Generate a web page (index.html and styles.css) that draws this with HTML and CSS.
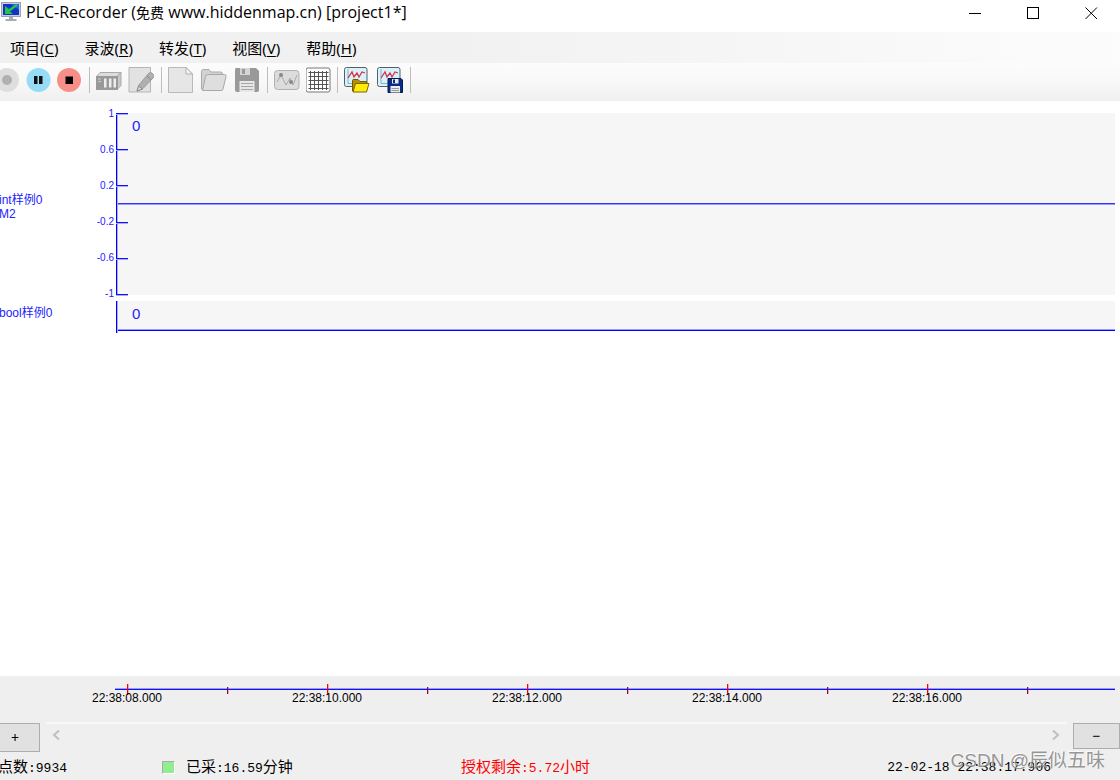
FILE: index.html
```html
<!DOCTYPE html>
<html lang="zh-CN">
<head>
<meta charset="utf-8">
<title>PLC-Recorder</title>
<link rel="stylesheet" href="styles.css">
</head>
<body>
<div class="window">
  <header class="titlebar">
    <svg class="app-icon" width="20" height="20" viewBox="0 0 20 20">
      <rect x="0.5" y="0.5" width="19" height="14" fill="#c9ced6" stroke="#9aa3b0"/>
      <rect x="2" y="2" width="16" height="11" fill="#1034c8"/>
      <path d="M10 2h8v6z" fill="#2a62ea"/>
      <path d="M4 4v8h8l-3-2.500 8-6-2-1.500-7 5z" fill="#22c44a"/>
      <path d="M8 15h4v2h3.500v2h-11v-2H8z" fill="#a9adb2"/>
    </svg>
    <h1 class="title">PLC-Recorder (<span class="title-han">免费</span> www.hiddenmap.cn) [project1*]</h1>
    <div class="window-buttons">
      <button class="window-button" aria-label="最小化"><svg width="13" height="13" viewBox="0 0 13 13"><path d="M0 6.500h12" stroke="#000"/></svg></button>
      <button class="window-button" aria-label="最大化"><svg width="13" height="13" viewBox="0 0 13 13"><rect x="0.500" y="0.500" width="11" height="11" fill="none" stroke="#000"/></svg></button>
      <button class="window-button" aria-label="关闭"><svg width="13" height="13" viewBox="0 0 13 13"><path d="M0.500 0.500l11.500 11.500M12 0.500L0.500 12" stroke="#000"/></svg></button>
    </div>
  </header>

  <nav class="menubar">
    <button class="menu">项目(<u>C</u>)</button>
    <button class="menu">录波(<u>R</u>)</button>
    <button class="menu">转发(<u>T</u>)</button>
    <button class="menu">视图(<u>V</u>)</button>
    <button class="menu">帮助(<u>H</u>)</button>
  </nav>

  <div class="toolbar" role="toolbar">
    <div class="tools tools-run">
      <button class="tool" aria-label="录制"><svg viewBox="0 0 26 26"><circle cx="13" cy="13" r="12" fill="#dedede"/><circle cx="13" cy="13" r="5" fill="#b0b0b0"/></svg></button>
      <button class="tool" aria-label="暂停"><svg viewBox="0 0 26 26"><circle cx="13.500" cy="13" r="12" fill="#96dcf6"/><path d="M9 9h3.500v8H9zM14 9h3.500v8H14z" fill="#111"/></svg></button>
      <button class="tool" aria-label="停止"><svg viewBox="0 0 26 26"><circle cx="13" cy="13" r="12" fill="#f78f88"/><path d="M9.500 9.500h7.500v7.500H9.500z" fill="#000"/></svg></button>
    </div>
    <span class="separator"></span>
    <div class="tools">
      <button class="tool" aria-label="设备"><svg viewBox="0 0 26 26"><path d="M0.500 9.500L4 5.500h21L21 9.500z" fill="#ddd" stroke="#aaa"/><path d="M21 9.500l4-4v13l-4 4z" fill="#c8c8c8" stroke="#aaa"/><rect x="0.500" y="9.500" width="21" height="13" fill="#999" stroke="#999"/><path d="M8 11.500h2.500v9H8zM13 11.500h2.500v9H13zM17.500 11.500H20v9h-2.500z" fill="#eee"/><path d="M2 12h3M2 14.500h3" stroke="#ccc"/></svg></button>
      <button class="tool" aria-label="编辑"><svg viewBox="0 0 26 26"><path d="M1 0.500h21.500v24.500H1z" fill="#e2e2e2" stroke="#b5b5b5"/><path d="M9 24l2-6L20.500 6.500q2-2 4 0t1 4L15.500 21z" fill="#b0b0b0" stroke="#999"/><path d="M9 24l1.500-5 4 3zM19 9l4 3.500" stroke="#888" fill="#ddd"/></svg></button>
    </div>
    <span class="separator"></span>
    <div class="tools tools-file">
      <button class="tool" aria-label="新建"><svg viewBox="0 0 26 26"><path d="M0.500 0.500H18l6.500 6.500v18.500h-24z" fill="#e6e6e6" stroke="#b9b9b9"/><path d="M18 0.500V7h6.500z" fill="#f4f4f4" stroke="#b0b0b0"/></svg></button>
      <button class="tool" aria-label="打开"><svg viewBox="0 0 26 26"><path d="M0.500 22V4.500q0-2 2-2H8l2 2.500h9.500q2 0 2 2V23h-19z" fill="#d2d2d2" stroke="#ababab"/><path d="M1.500 23.500L4.500 9.500q.5-2 2.500-2h16.500q2 0 1.500 2L22 22q-.5 1.500-2 1.500z" fill="#dedede" stroke="#a8a8a8"/></svg></button>
      <button class="tool" aria-label="保存"><svg viewBox="0 0 26 26"><path d="M2 1h20l3 3v19q0 2-2 2H3q-2 0-2-2V3q0-2 1-2z" fill="#999"/><path d="M6 1h10v7H6z" fill="#d5d5d5"/><path d="M8 2h3v5H8z" fill="#999"/><path d="M5.500 14h15v11h-15z" fill="#e7e7e7"/><path d="M7 16.500h12M7 19.500h12M7 22.500h12" stroke="#a5a5a5"/></svg></button>
    </div>
    <span class="separator"></span>
    <div class="tools">
      <button class="tool" aria-label="曲线"><svg viewBox="0 0 26 26"><rect x="0.500" y="3.500" width="24.500" height="19" rx="3" fill="#dcdcdc" stroke="#b0b0b0"/><path d="M3 15l4-7 5 10 4-7 3 7 4-10" fill="none" stroke="#aaa"/><circle cx="7" cy="8" r="2" fill="#888"/><circle cx="17" cy="15" r="2" fill="#888"/></svg></button>
      <button class="tool" aria-label="网格"><svg viewBox="0 0 26 26"><rect x="0" y="1" width="24" height="24" rx="2" fill="#fff" stroke="#777"/><path d="M4.500 4v19M8.500 4v19M12.500 4v19M16.500 4v19M20.500 4v19M2.500 5.500h20M2.500 9.500h20M2.500 13.500h20M2.500 17.500h20M2.500 21.500h20" stroke="#555"/></svg></button>
    </div>
    <span class="separator separator-tight"></span>
    <div class="tools tools-file">
      <button class="tool" aria-label="打开曲线"><svg viewBox="0 0 26 26"><rect x="0.500" y="0.500" width="22.500" height="19" rx="2" fill="#d8f1fb" stroke="#555f66"/><path d="M4 2v14.500h18" stroke="#7fb5cf" fill="none"/><path d="M4 11l4-6 2 5 3-4 2 4 3-5 3 1" fill="none" stroke="#d83342" stroke-width="1.300"/><path d="M8.500 24V13.500q0-1 1-1H14l2 2h6.500V24z" fill="#b88e0c" stroke="#725a00"/><path d="M9 25l2.500-8.500H25L22.500 25z" fill="#ffec0a" stroke="#796700"/></svg></button>
      <button class="tool" aria-label="保存曲线"><svg viewBox="0 0 26 26"><rect x="0.500" y="0.500" width="22.500" height="19" rx="2" fill="#d8f1fb" stroke="#555f66"/><path d="M4 2v14.500h18" stroke="#7fb5cf" fill="none"/><path d="M4 11l4-6 2 5 3-4 2 4 3-5 3 1" fill="none" stroke="#d83342" stroke-width="1.300"/><path d="M11 11.500h13l1.500 1.500v12.500H11z" fill="#0a2d83" stroke="#061a54"/><path d="M15 12h6.500v4.500H15zM13.500 19h9.500v6.500h-9.500z" fill="#e9edf3"/><path d="M16 12.500h2V16h-2z" fill="#0a2d83"/><path d="M14.500 21.500H22M14.500 23.500H22" stroke="#999"/></svg></button>
    </div>
    <span class="separator"></span>
  </div>

  <main class="charts">
    <section class="chart chart-int">
      <div class="channel">int样例0<br>M2</div>
      <ol class="scale">
        <li class="scale-mark">1</li>
        <li class="scale-mark">0.6</li>
        <li class="scale-mark">0.2</li>
        <li class="scale-mark">-0.2</li>
        <li class="scale-mark">-0.6</li>
        <li class="scale-mark">-1</li>
      </ol>
      <div class="plot plot-int"><span class="value">0</span></div>
    </section>
    <section class="chart chart-bool">
      <div class="channel channel-bool">bool样例0</div>
      <div class="scale"></div>
      <div class="plot plot-bool"><span class="value">0</span></div>
    </section>
  </main>

  <footer class="bottom">
    <div class="timeline">
      <div class="timeline-line"></div>
      <ol class="times">
        <li class="time">22:38:08.000</li>
        <li class="time time-minor"></li>
        <li class="time">22:38:10.000</li>
        <li class="time time-minor"></li>
        <li class="time">22:38:12.000</li>
        <li class="time time-minor"></li>
        <li class="time">22:38:14.000</li>
        <li class="time time-minor"></li>
        <li class="time">22:38:16.000</li>
        <li class="time time-minor"></li>
      </ol>
    </div>
    <div class="scroll-row">
      <button class="zoom zoom-in">+</button>
      <div class="scrollbar">
        <button class="arrow" aria-label="向左"><svg width="10" height="10" viewBox="0 0 10 10"><path d="M8 0.500L3 5l5 4.500" fill="none" stroke="#bfbfbf" stroke-width="2"/></svg></button>
        <button class="arrow" aria-label="向右"><svg width="10" height="10" viewBox="0 0 10 10"><path d="M2 0.500L7 5l-5 4.500" fill="none" stroke="#bfbfbf" stroke-width="2"/></svg></button>
      </div>
      <button class="zoom zoom-out">−</button>
    </div>
    <div class="status">
      <span class="status-points"><span class="han">点数</span>:9934</span>
      <span class="status-sampled"><i class="lamp"></i><span><span class="han">已采</span>:16.59<span class="han">分钟</span></span></span>
      <span class="status-license"><span class="han">授权剩余</span>:5.72<span class="han">小时</span></span>
      <time class="status-time">22-02-18 22:38:17.906</time>
    </div>
  </footer>
  <div class="watermark">CSDN @辰似五味</div>
</div>
</body>
</html>
```
FILE: styles.css
```css
* { box-sizing: border-box; }

body {
  margin: 0;
  background: #fff;
  color: #000;
  font-family: "Noto Sans", "Noto Sans CJK SC", sans-serif;
}

button {
  padding: 0;
  border: 0;
  background: none;
  color: inherit;
  font: inherit;
}

ol { margin: 0; padding: 0; list-style: none; }

.window {
  position: relative;
  display: flex;
  flex-direction: column;
  min-height: 100vh;
  overflow: hidden;
}

.titlebar {
  display: flex;
  align-items: flex-start;
  height: 32px;
  padding: 2px 0 0 1px;
}

.title {
  margin: 0 auto 0 5px;
  font-family: "Open Sans", "Noto Sans CJK SC", sans-serif;
  font-size: 16px;
  font-weight: 400;
  line-height: 20px;
  white-space: nowrap;
}

.title-han { font-size: 14px; }

.window-buttons { display: flex; }

.window-button {
  display: flex;
  align-items: center;
  justify-content: center;
  width: 58px;
  height: 22px;
}

.menubar {
  display: flex;
  gap: 26px;
  height: 31px;
  padding-left: 10px;
  background: linear-gradient(90deg, #f0f0f0, #f1f1f1 40%, #fcfcfc);
}

.menu {
  font-size: 15px;
  line-height: 30px;
  white-space: nowrap;
}

.menu u { text-underline-offset: 2px; }

.toolbar {
  display: flex;
  align-items: center;
  height: 38px;
  padding-bottom: 4px;
  background: linear-gradient(#fcfcfc, #f8f8f8 50%, #efefef);
}

.tools { display: flex; gap: 6px; }
.tools-run { gap: 5px; margin-left: -6px; }
.tools-file { gap: 7px; }
.tool { width: 26px; height: 26px; }
.tool svg { display: block; width: 26px; height: 26px; }

.separator {
  width: 1px;
  height: 26px;
  margin: 0 6px 0 7px;
  background: #bdbdbd;
}

.separator-tight { margin-left: 5px; }

.charts {
  flex: 1;
  display: flex;
  flex-direction: column;
  gap: 6px;
  padding: 12px 5px 0 0;
  color: #22f;
}

.chart {
  display: grid;
  grid-template-columns: 72px 44px 1fr;
}

.chart-int { height: 182px; }
.chart-bool { height: 32px; }

.channel {
  align-self: center;
  padding-top: 5px;
  font-family: "Liberation Sans", "Noto Sans CJK SC", sans-serif;
  font-size: 12px;
  line-height: 14px;
  margin-left: -1px;
}

.channel-bool { align-self: start; }

.scale {
  display: flex;
  flex-direction: column;
  justify-content: space-between;
}

.scale-mark {
  display: flex;
  align-items: center;
  justify-content: flex-end;
  gap: 2px;
  height: 1px;
  margin-right: -12px;
  font-family: "Liberation Sans", sans-serif;
  font-size: 10px;
  line-height: 12px;
}

.scale-mark::after {
  content: "";
  width: 12px;
  height: 1px;
  background: #11f;
  box-shadow: 0 1px #aaf;
  z-index: 1;
}

.plot {
  padding-left: 15px;
  border-left: 1px solid #00f;
  box-shadow: inset 1px 0 #aaf;
}

.plot-int {
  background: linear-gradient(#33f 50%, #99f 50%) center / 100% 2px no-repeat #f6f6f6;
}

.plot-bool {
  background: linear-gradient(#99f 50%, #00f 50%) 0 28px / 100% 2px no-repeat,
    linear-gradient(#f6f6f6, #f6f6f6) 0 0 / 100% 29px no-repeat;
}

.value {
  font-family: "Liberation Sans", sans-serif;
  font-size: 15px;
  line-height: 26px;
}

.bottom { background: #efefef; }

.timeline { height: 46px; padding-top: 13px; }

.timeline-line {
  height: 1px;
  margin: 0 5px 0 115px;
  background: #11f;
  box-shadow: 0 -1px #99f;
}

.times {
  display: flex;
  margin-top: -6px;
  padding: 0 43px 0 77px;
}

.time {
  flex: 1 0 0;
  display: flex;
  flex-direction: column;
  align-items: center;
  font-family: "Liberation Sans", sans-serif;
  font-size: 12px;
  line-height: 12px;
  white-space: nowrap;
}

.time::before {
  content: "";
  width: 1px;
  height: 11px;
  margin-bottom: -3px;
  background: #f00;
  box-shadow: 1px 0 rgba(255, 0, 0, 0.3);
}

.time-minor::before {
  height: 7px;
  margin-top: 3px;
  background: #712;
}

.scroll-row { display: flex; align-items: flex-start; height: 31px; }

.zoom {
  width: 47px;
  height: 26px;
  margin-top: 1px;
  border: 1px solid #adadad;
  background: #e1e1e1;
  font-size: 14px;
  line-height: 22px;
}

.zoom-in { width: 41px; height: 29px; margin-left: -1px; padding-right: 9px; }

.scrollbar {
  flex: 1;
  display: flex;
  justify-content: space-between;
  margin: 0 6px;
  padding: 6px 6px 0 5px;
  border-top: 2px solid #f8f8f8;
}

.arrow { height: 10px; }
.arrow svg { display: block; }

.status {
  display: grid;
  grid-template-columns: 162px 299px 1fr auto;
  align-items: center;
  height: 27px;
  padding-right: 69px;
  font-family: "Liberation Mono", monospace;
  font-size: 13px;
  line-height: 26px;
  white-space: nowrap;
}

.han { font-family: "Noto Sans CJK SC", sans-serif; font-size: 15px; }
.status-points { margin-left: -2px; }
.status-sampled { display: flex; align-items: center; gap: 11px; }
.status-license { color: #f00; }

.lamp {
  width: 13px;
  height: 13px;
  border: 1px solid #fff;
  border-top-color: #aaa;
  border-left-color: #aaa;
  background: #90ee90;
}

.watermark {
  position: absolute;
  right: 15px;
  bottom: 5px;
  color: rgba(125, 125, 125, 0.8);
  font-family: "Liberation Sans", "Noto Sans CJK SC", sans-serif;
  font-size: 19px;
  line-height: 28px;
  text-shadow: -1px -1px 0 rgba(255, 255, 255, 0.7);
}
```
